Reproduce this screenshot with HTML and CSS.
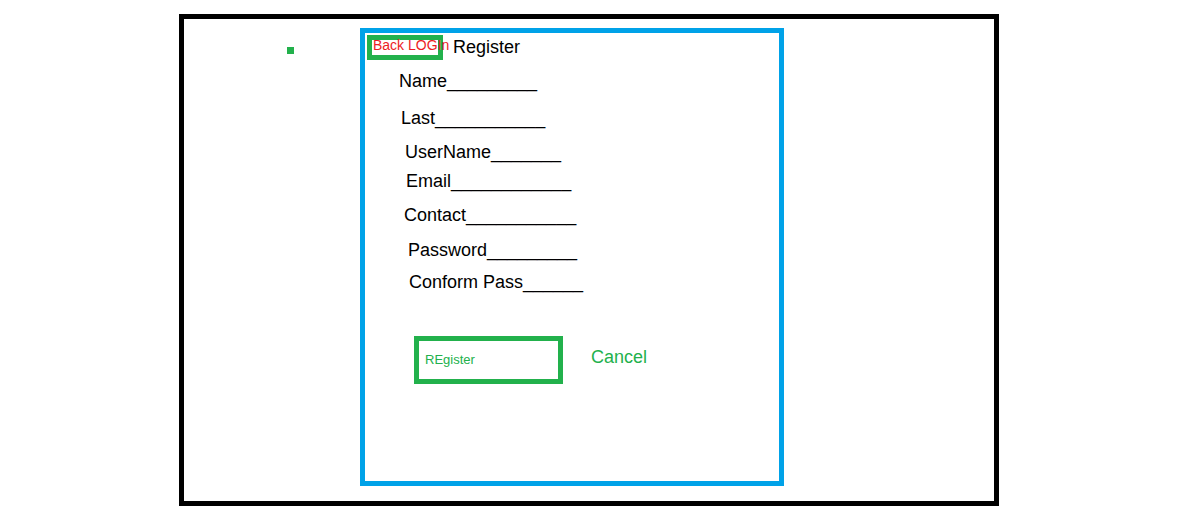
FILE: index.html
```html
<!DOCTYPE html>
<html>
<head>
<meta charset="utf-8">
<title>Register</title>
<link rel="stylesheet" href="styles.css">
</head>
<body>
<div class="frame">
  <div class="dot"></div>
  <div class="panel">
    <div class="header">
      <div class="back-box"><span class="back-label">Back LOGIn</span></div>
      <div class="title">Register</div>
    </div>
    <div class="row r1">Name_________</div>
    <div class="row r2">Last___________</div>
    <div class="row r3">UserName_______</div>
    <div class="row r4">Email____________</div>
    <div class="row r5">Contact___________</div>
    <div class="row r6">Password_________</div>
    <div class="row r7">Conform Pass______</div>
    <div class="actions">
      <div class="btn-register"><span>REgister</span></div>
      <div class="btn-cancel">Cancel</div>
    </div>
  </div>
</div>
</body>
</html>
```

FILE: styles.css
```css
html, body {
  margin: 0;
  padding: 0;
  background: #ffffff;
}
body {
  font-family: "Liberation Sans", Arial, sans-serif;
  color: #000;
}
.frame {
  box-sizing: border-box;
  margin-left: 179px;
  margin-top: 14px;
  width: 820px;
  height: 492px;
  border: 5px solid #000;
  display: flex;
  align-items: flex-start;
  padding-left: 103px;
}
.dot {
  width: 7px;
  height: 7px;
  background: #22b14c;
  margin-top: 28px;
  flex: none;
}
.panel {
  box-sizing: border-box;
  width: 424px;
  height: 458px;
  margin-left: 66px;
  margin-top: 9px;
  border: 5px solid #00a2e8;
  display: flex;
  flex-direction: column;
  align-items: flex-start;
  flex: none;
}
.header {
  display: flex;
  align-items: flex-start;
  margin-top: 2px;
  margin-left: 2px;
}
.back-box {
  box-sizing: border-box;
  width: 76px;
  height: 25px;
  border: 5px solid #22b14c;
  white-space: nowrap;
  overflow: visible;
}
.back-label {
  display: block;
  font-size: 14px;
  line-height: 15px;
  color: #ed1c24;
  margin-top: -2px;
  padding-left: 1px;
}
.title {
  font-size: 18px;
  line-height: 22px;
  margin-left: 10px;
  margin-top: 1px;
}
.row {
  font-size: 18px;
  line-height: 22px;
  white-space: nowrap;
}
.r1 { margin-top: 10px; margin-left: 34px; }
.r2 { margin-top: 15px; margin-left: 36px; }
.r3 { margin-top: 12px; margin-left: 40px; }
.r4 { margin-top: 7px;  margin-left: 41px; }
.r5 { margin-top: 12px; margin-left: 39px; }
.r6 { margin-top: 13px; margin-left: 43px; }
.r7 { margin-top: 10px; margin-left: 44px; }
.actions {
  display: flex;
  align-items: flex-start;
  margin-top: 43px;
  margin-left: 49px;
}
.btn-register {
  box-sizing: border-box;
  width: 149px;
  height: 48px;
  border: 5px solid #22b14c;
  display: flex;
  align-items: center;
  padding-left: 6px;
  font-size: 13px;
  line-height: 16px;
  color: #22b14c;
}
.btn-cancel {
  font-size: 18px;
  line-height: 22px;
  color: #22b14c;
  margin-left: 28px;
  margin-top: 10px;
}
```
